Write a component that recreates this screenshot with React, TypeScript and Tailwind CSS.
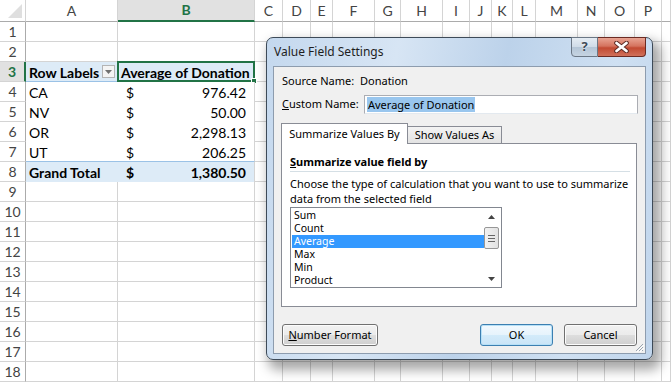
import React from "react";

const GRID =
  "grid grid-cols-[26px_92px_137px_28px_28px_22px_42px_26px_42px_27px_22px_21px_23px_42px_27px_30px_27px_9px]";

const letters = ["A", "B", "C", "D", "E", "F", "G", "H", "I", "J", "K", "L", "M", "N", "O", "P", ""];

type PivotRow = { label: string; val: string; bold?: boolean; fill?: boolean; dollar?: boolean };

const pivot: Record<number, PivotRow> = {
  3: { label: "Row Labels", val: "Average of Donation", bold: true, fill: true },
  4: { label: "CA", val: "976.42", dollar: true },
  5: { label: "NV", val: "50.00", dollar: true },
  6: { label: "OR", val: "2,298.13", dollar: true },
  7: { label: "UT", val: "206.25", dollar: true },
  8: { label: "Grand Total", val: "1,380.50", bold: true, fill: true, dollar: true },
};

const summaries = ["Sum", "Count", "Average", "Max", "Min", "Product"];

function Corner() {
  return (
    <div className="flex items-end justify-end border-r border-b border-r-[#d4d4d4] border-b-[#ababab] pb-[3px] pr-[3px]">
      <svg width="14" height="14" viewBox="0 0 14 14">
        <polygon points="14,0 14,14 0,14" fill="#dfdfdf" />
      </svg>
    </div>
  );
}

function FilterButton() {
  return (
    <div className="mr-[3px] -mt-[2px] flex h-[13px] w-[13px] items-center justify-center border border-[#b4b4b4] bg-[#f4f4f4]">
      <svg width="7" height="4" viewBox="0 0 7 4">
        <polygon points="0,0 7,0 3.5,4" fill="#707070" />
      </svg>
    </div>
  );
}

function Sheet() {
  const rows = Array.from({ length: 18 }, (_, i) => i + 1);
  return (
    <div className="font-['Lato',sans-serif] text-[14px] leading-none text-black">
      <div className={`${GRID} h-[22px]`}>
        <Corner />
        {letters.map((l, i) => (
          <div
            key={i}
            className={
              l === "B"
                ? "flex items-center justify-center border-r border-r-[#d4d4d4] border-b-2 border-b-[#217346] bg-[#e1e1e1] font-bold text-[#217346]"
                : "flex items-center justify-center border-r border-b border-r-[#d4d4d4] border-b-[#ababab] text-[#444]"
            }
          >
            {l}
          </div>
        ))}
      </div>
      {rows.map((r) => {
        const p = pivot[r];
        const inPivot = r >= 3 && r <= 8;
        const blueLine = r === 3 || r === 7;
        return (
          <div key={r} className={`${GRID} h-[20px]`}>
            <div
              className={
                r === 3
                  ? "flex items-center justify-center border-r-2 border-r-[#217346] border-b border-b-[#d4d4d4] bg-[#e1e1e1] pt-px font-bold text-[#217346]"
                  : "flex items-center justify-center border-r border-b border-r-[#ababab] border-b-[#d4d4d4] pt-px text-[#444]"
              }
            >
              {r}
            </div>
            <div
              className={
                !inPivot
                  ? "border-r border-b border-[#d4d4d4]"
                  : blueLine
                  ? "flex items-center justify-between border-b border-b-[#9bc2e6] pt-[2px] pl-[3px]" + (p?.fill ? " bg-[#ddebf7]" : " bg-white")
                  : "flex items-center justify-between pt-[2px] pl-[3px]" + (p?.fill ? " bg-[#ddebf7]" : " bg-white")
              }
            >
              {p && <span className={p.bold ? "font-bold" : ""}>{p.label}</span>}
              {r === 3 && <FilterButton />}
            </div>
            <div
              className={
                !inPivot
                  ? "border-r border-b border-[#d4d4d4]"
                  : blueLine
                  ? "relative flex items-center justify-between border-r border-r-[#d4d4d4] border-b border-b-[#9bc2e6] pt-[2px]" + (p?.fill ? " bg-[#ddebf7]" : " bg-white")
                  : "relative flex items-center justify-between border-r border-r-[#d4d4d4] pt-[2px]" + (p?.fill ? " bg-[#ddebf7]" : " bg-white")
              }
            >
              {p && p.dollar && (
                <>
                  <span className={p.bold ? "pl-[8px] font-bold" : "pl-[8px]"}>$</span>
                  <span className={p.bold ? "pr-[8px] font-bold" : "pr-[8px]"}>{p.val}</span>
                </>
              )}
              {p && !p.dollar && <span className="pl-[3px] font-bold">{p.val}</span>}
              {r === 3 && (
                <>
                  <div className="pointer-events-none absolute -top-px -left-px -right-px -bottom-px border-2 border-[#217346]" />
                  <div className="absolute -right-[3px] -bottom-[3px] h-[6px] w-[6px] border border-white bg-[#217346]" />
                </>
              )}
            </div>
            {letters.slice(2).map((_, i) => (
              <div key={i} className="border-r border-b border-[#d4d4d4]" />
            ))}
          </div>
        );
      })}
    </div>
  );
}

function CloseX() {
  return (
    <svg width="15" height="12" viewBox="0 0 15 12">
      <path d="M2.5 2 L12.5 10 M12.5 2 L2.5 10" stroke="#5b2a24" strokeWidth="4.6" strokeLinecap="round" />
      <path d="M2.5 2 L12.5 10 M12.5 2 L2.5 10" stroke="#ffffff" strokeWidth="2.8" strokeLinecap="round" />
    </svg>
  );
}

function Btn({ children, primary, className }: { children: React.ReactNode; primary?: boolean; className: string }) {
  return (
    <div
      className={
        (primary
          ? "border-[#3c7fb1] shadow-[inset_0_0_0_1px_#b6e0f7] bg-[linear-gradient(#f2f9fe_0%,#e6f3fc_50%,#d3ebfa_51%,#c9e4f7_100%)] "
          : "border-[#707070] shadow-[inset_0_0_0_1px_#fcfcfc] bg-[linear-gradient(#f2f2f2_0%,#ebebeb_50%,#dddddd_51%,#cfcfcf_100%)] ") +
        "flex h-[22px] items-center justify-center rounded-[3px] border text-black " +
        className
      }
    >
      {children}
    </div>
  );
}

function Dialog() {
  return (
    <div className="absolute left-[266px] top-[37px] flex h-[323px] w-[387px] flex-col rounded-[7px] border border-[#3d4a58] bg-[linear-gradient(100deg,#c4d8ee_0%,#d7e5f4_30%,#bcd2ea_55%,#cfe0f2_80%,#c0d5ec_100%)] font-['Noto_Sans',sans-serif] text-[11px] text-black shadow-[5px_7px_12px_3px_rgba(0,0,0,0.35)]">
      <div className="flex h-[28px] items-start">
        <div className="flex h-[28px] flex-1 items-center pl-[7px] text-[12px] text-[#1e1e1e]">Value Field Settings</div>
        <div className="-mt-px mr-[6px] flex h-[20px]">
          <div className="flex w-[27px] items-center justify-center rounded-bl-[4px] border border-[#6b7785] bg-[linear-gradient(#e5ecf3_0%,#cfdbe7_50%,#b4c5d6_51%,#c6d4e2_100%)] text-[13px] font-bold text-[#3e4a57] [text-shadow:0_0_2px_#fff]">
            ?
          </div>
          <div className="flex w-[48px] items-center justify-center rounded-br-[4px] border border-l-0 border-[#6b2a22] bg-[linear-gradient(#e8a493_0%,#d5735e_45%,#c24a32_55%,#d0705a_100%)]">
            <CloseX />
          </div>
        </div>
      </div>
      <div className="relative mx-[6px] mb-[5px] flex flex-1 flex-col border border-[#8d9cae] bg-[#f0f0f0]">
        <div className="mt-[5px] flex h-[18px] items-center px-[8px]">
          <span className="w-[78px]">Source Name:</span>
          <span>Donation</span>
        </div>
        <div className="mt-[5px] flex h-[19px] items-center pl-[8px] pr-[7px]">
          <span className="w-[82px]">
            <span className="underline">C</span>ustom Name:
          </span>
          <div className="flex h-[19px] flex-1 items-center border border-[#abadb3] border-b-[#e3e9ef] bg-white pl-[2px]">
            <span className="bg-[#99c6ee] px-px leading-[15px]">Average of Donation</span>
          </div>
        </div>
        <div className="ml-[7px] mr-[8px] mt-[9px] flex h-[20px] items-end">
          <div className="relative z-10 -mb-px flex h-[21px] w-[127px] items-center justify-center border border-b-0 border-[#898c95] bg-white">
            Summarize Values By
          </div>
          <div className="flex h-[17px] w-[94px] items-center justify-center border border-l-0 border-b-0 border-[#898c95] bg-[linear-gradient(#f3f3f3,#e3e3e3)]">
            Show Values As
          </div>
        </div>
        <div className="ml-[7px] mr-[8px] flex h-[164px] flex-col border border-[#898c95] bg-white pl-[8px] pr-[6px]">
          <div className="mt-[10px] flex h-[16px] items-center font-bold">
            <span className="underline">S</span>ummarize value field by
          </div>
          <div className="mt-px h-px bg-[#d5dfe5]" />
          <div className="mt-[4px] leading-[15px]">
            Choose the type of calculation that you want to use to summarize
            <br />
            data from the selected field
          </div>
          <div className="mt-px flex h-[81px] w-[212px] border border-[#828790] bg-white">
            <div className="flex flex-1 flex-col pt-px pl-px">
              {summaries.map((s) => (
                <div
                  key={s}
                  className={
                    s === "Average"
                      ? "h-[13px] overflow-hidden bg-[#3399ff] pl-[2px] text-[10.5px] leading-[13px] text-white"
                      : "h-[13px] overflow-hidden pl-[2px] text-[10.5px] leading-[13px]"
                  }
                >
                  {s}
                </div>
              ))}
            </div>
            <div className="my-px mr-[2px] flex w-[15px] flex-col items-center">
              <div className="flex h-[15px] w-full items-center justify-center">
                <svg width="7" height="4" viewBox="0 0 7 4">
                  <polygon points="3.5,0 7,4 0,4" fill="#444" />
                </svg>
              </div>
              <div className="mt-[3px] flex h-[22px] w-full flex-col items-center justify-center gap-[2px] rounded-[2px] border border-[#979797] bg-[linear-gradient(90deg,#f2f2f2,#e2e2e2)]">
                <div className="h-px w-[7px] bg-[#666]" />
                <div className="h-px w-[7px] bg-[#666]" />
                <div className="h-px w-[7px] bg-[#666]" />
              </div>
              <div className="flex-1" />
              <div className="flex h-[15px] w-full items-center justify-center">
                <svg width="7" height="4" viewBox="0 0 7 4">
                  <polygon points="0,0 7,0 3.5,4" fill="#444" />
                </svg>
              </div>
            </div>
          </div>
        </div>
        <div className="mt-[17px] flex items-center pl-[8px] pr-[8px]">
          <Btn className="w-[96px]">
            <span>
              <span className="underline">N</span>umber Format
            </span>
          </Btn>
          <div className="flex-1" />
          <Btn primary className="w-[73px]">
            OK
          </Btn>
          <Btn className="ml-[11px] w-[73px]">Cancel</Btn>
        </div>
        <svg className="absolute right-px bottom-px" width="10" height="10" viewBox="0 0 10 10">
          <path d="M9 2 L2 9 M9 5 L5 9 M9 8 L8 9" stroke="#9aa4ae" strokeWidth="1" />
          <path d="M10 3 L3 10 M10 6 L6 10" stroke="#ffffff" strokeWidth="1" />
        </svg>
      </div>
    </div>
  );
}

export default function App() {
  return (
    <div className="relative h-[383px] w-[671px] overflow-hidden bg-white">
      <Sheet />
      <Dialog />
    </div>
  );
}
